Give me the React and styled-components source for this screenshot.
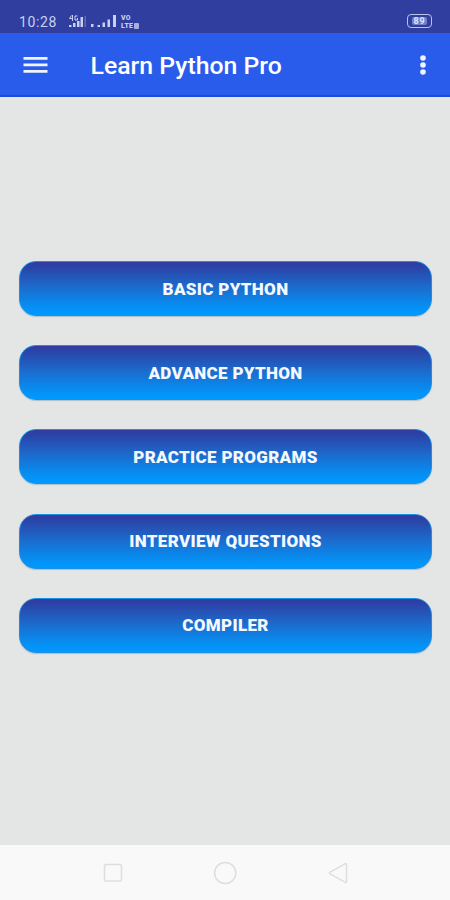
import React from "react";
import styled, { createGlobalStyle } from "styled-components";

const GlobalStyle = createGlobalStyle`
  * { box-sizing: border-box; }
  body { margin: 0; font-family: Roboto, "Liberation Sans", sans-serif; }
`;

const Screen = styled.div`
  width: 450px;
  height: 900px;
  display: flex;
  flex-direction: column;
  background: #e3e6e5;
  overflow: hidden;
`;

const StatusBar = styled.header`
  flex: none;
  height: 33px;
  padding: 10px 18px 0 19px;
  display: flex;
  align-items: flex-start;
  background: #303f9f;
  color: #c9cff0;
`;

const Clock = styled.span`
  width: 49px;
  font-size: 14px;
  line-height: 24px;
  letter-spacing: 0.65px;
`;

const SignalIcon = styled.svg`
  display: block;
  flex: none;
  margin-top: 3px;
`;

const Volte = styled.span`
  display: flex;
  flex-direction: column;
  margin: 4px 0 0 3px;
  font-size: 6.8px;
  font-weight: 900;
  line-height: 8px;
  letter-spacing: 0.4px;
`;

const VolteBadge = styled.span`
  display: flex;
  gap: 1px;
`;

const SimBadge = styled.span`
  width: 5px;
  height: 6px;
  margin-top: 1px;
  border-radius: 1px;
  background: #a5afe0;
`;

const Battery = styled.span`
  margin: 4px 0 0 auto;
  width: 25px;
  height: 14px;
  display: flex;
  align-items: center;
  justify-content: center;
  border: 1px solid #b9c1ec;
  border-radius: 4px;
`;

const BatteryLevel = styled.span`
  width: 15px;
  height: 8px;
  border-radius: 2px;
  background: #7380c5;
  font-size: 9px;
  line-height: 9px;
  font-weight: 700;
  letter-spacing: 0.8px;
  text-align: center;
  color: #dfe3fa;
`;

const AppBar = styled.nav`
  flex: none;
  height: 64px;
  padding: 2px 23px 0;
  display: flex;
  align-items: center;
  background: #2a5ceb;
  border-bottom: 2px solid #1d48dc;
  color: #fff;
`;

const IconButton = styled.button`
  display: flex;
  padding: 0;
  border: 0;
  background: none;
  color: #f0f4ff;
`;

const Title = styled.h1`
  flex: 1;
  margin: 1px 0 0 42.5px;
  font-size: 24.8px;
  line-height: 30px;
  font-weight: 500;
`;

const Menu = styled.main`
  flex: 1;
  padding: 164px 18px 0 19px;
  display: flex;
  flex-direction: column;
  gap: 29.2px;
`;

const MenuButton = styled.button`
  flex: none;
  height: 55px;
  padding: 0;
  border: 1px solid #1b91e6;
  border-radius: 17px;
  background: linear-gradient(#303ba2 0%, #2c42a7 10%, #1b6ccd 48%, #068ff3 83%, #0099ff 97%) border-box;
  box-shadow: 0 1px 1px rgba(80, 120, 150, 0.35);
  color: #f5f8ff;
  font: 900 17px/20px Roboto, "Liberation Sans", sans-serif;
  letter-spacing: 0.32px;
`;

const NavigationBar = styled.footer`
  flex: none;
  height: 55px;
  padding: 0 100.5px 0 101px;
  display: flex;
  align-items: center;
  justify-content: space-between;
  background: #f9f9f9;
`;

const NavIcon = styled.svg`
  display: block;
  fill: none;
  stroke: #dedede;
  stroke-width: 1.5;
  stroke-linejoin: round;
`;

const items = [
  "BASIC PYTHON",
  "ADVANCE PYTHON",
  "PRACTICE PROGRAMS",
  "INTERVIEW QUESTIONS",
  "COMPILER",
];

export default function App() {
  return (
    <>
      <GlobalStyle />
      <Screen>
        <StatusBar>
          <Clock>10:28</Clock>
          <SignalIcon width="50" height="16" viewBox="0 0 50 16" fill="currentColor">
            <path d="M1 12h2.5v2H1zM5 10h2.5v4H5zM9 8h2.5v6H9zM12.5 4H15v10h-2.5z" />
            <path d="M3.5 2.5 1.5 5.5H5M4.5 2v6M9.5 3H7v4h2.5V5" fill="none" stroke="currentColor" />
            <path d="M16.5 3H18v11h-1.5z" opacity=".3" />
            <path d="M23 11h2.5v3H23zM29.5 12H32v2h-2.5zM34.5 9.5H37V14h-2.5zM39.5 6.5H42V14h-2.5zM45 2h3v12h-3z" />
          </SignalIcon>
          <Volte>
            <span>VO</span>
            <VolteBadge>LTE<SimBadge /></VolteBadge>
          </Volte>
          <Battery><BatteryLevel>89</BatteryLevel></Battery>
        </StatusBar>
        <AppBar>
          <IconButton aria-label="Open menu">
            <svg width="25" height="18" viewBox="0 0 25 18" fill="currentColor">
              <path d="M0.5 1h24v2.7h-24zM0.5 7.6h24v2.7h-24zM0.5 14h24v2.7h-24z" />
            </svg>
          </IconButton>
          <Title>Learn Python Pro</Title>
          <IconButton aria-label="More options">
            <svg width="8" height="22" viewBox="0 0 8 22" fill="currentColor">
              <circle cx="4" cy="4" r="2.8" /><circle cx="4" cy="11" r="2.8" /><circle cx="4" cy="18" r="2.8" />
            </svg>
          </IconButton>
        </AppBar>
        <Menu>
          {items.map((label) => (
            <MenuButton key={label}>{label}</MenuButton>
          ))}
        </Menu>
        <NavigationBar>
          <NavIcon width="24" height="24" viewBox="0 0 24 24"><rect x="3.5" y="3.5" width="17" height="16.5" rx="1.5" /></NavIcon>
          <NavIcon width="24" height="24" viewBox="0 0 24 24"><circle cx="12.2" cy="12" r="10.6" /></NavIcon>
          <NavIcon width="24" height="24" viewBox="0 0 24 24"><path d="M19 2.8Q20.5 2 20.5 3.8V20.2Q20.5 22 19 21.2L4 12.9Q2.7 12 4 11.1Z" /></NavIcon>
        </NavigationBar>
      </Screen>
    </>
  );
}
